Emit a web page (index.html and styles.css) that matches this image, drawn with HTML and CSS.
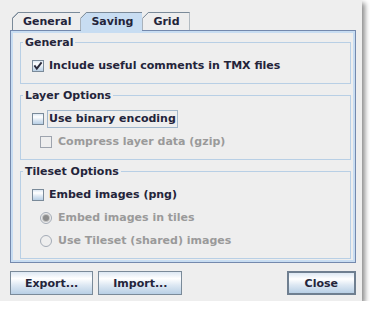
FILE: index.html
```html
<!DOCTYPE html>
<html>
<head>
<meta charset="utf-8">
<link rel="stylesheet" href="styles.css">
</head>
<body>
<div class="window">
  <div class="tabs">
    <div class="tab">General</div>
    <div class="tab sel">Saving</div>
    <div class="tab last">Grid</div>
  </div>
  <div class="panel">
    <fieldset class="group">
      <legend>General</legend>
      <div class="opt"><span class="box"><svg width="10" height="10" viewBox="0 0 10 10"><path d="M2 5.2 L3.8 7.6 L8 2.2" fill="none" stroke="#2a2a3a" stroke-width="1.9" stroke-linecap="square"/></svg></span><span class="lbl">Include useful comments in TMX files</span></div>
    </fieldset>
    <fieldset class="group">
      <legend>Layer Options</legend>
      <div class="opt"><span class="box"></span><span class="lbl focus">Use binary encoding</span></div>
      <div class="opt sub dis"><span class="box"></span><span class="lbl">Compress layer data (gzip)</span></div>
    </fieldset>
    <fieldset class="group">
      <legend>Tileset Options</legend>
      <div class="opt"><span class="box"></span><span class="lbl">Embed images (png)</span></div>
      <div class="opt sub dis"><span class="radio on"></span><span class="lbl">Embed images in tiles</span></div>
      <div class="opt sub dis"><span class="radio"></span><span class="lbl">Use Tileset (shared) images</span></div>
    </fieldset>
  </div>
  <div class="buttons">
    <button class="btn">Export...</button>
    <button class="btn">Import...</button>
    <button class="btn default">Close</button>
  </div>
</div>
</body>
</html>
```
FILE: styles.css
```css
html, body {
  margin: 0;
  padding: 0;
  background: #ffffff;
}
body {
  font-family: "DejaVu Sans", "Liberation Sans", sans-serif;
  font-weight: bold;
  font-size: 11px;
  color: #24243a;
}
.window {
  width: 362px;
  height: 301px;
  box-sizing: border-box;
  background: #eeeeee;
  padding: 12px 6px 0 10px;
  box-shadow: 3px 3px 5px rgba(0, 0, 0, 0.45);
}
.tabs {
  display: flex;
  align-items: flex-end;
  height: 18px;
  margin-left: 2px;
}
.tab {
  box-sizing: border-box;
  height: 18px;
  line-height: 17px;
  padding: 0 9px 0 10px;
  border-top: 1px solid #7a8a99;
  border-left: 1px solid #7a8a99;
  background: linear-gradient(135deg, transparent 4.2px, #7a8a99 4.2px, #7a8a99 5.2px, #eeeeee 5.2px);
  background-origin: border-box;
  clip-path: polygon(6px 0, 100% 0, 100% 100%, 0 100%, 0 6px);
}
.tab.sel {
  height: 19px;
  margin-bottom: -1px;
  position: relative;
  z-index: 1;
  background: linear-gradient(135deg, transparent 4.2px, #7a8a99 4.2px, #7a8a99 5.2px, #c8ddf2 5.2px);
  background-origin: border-box;
}
.tab.last {
  border-right: 1px solid #7a8a99;
}
.panel {
  height: 233px;
  box-sizing: border-box;
  border: 1px solid #7489ad;
  box-shadow: inset 0 0 0 2px #c8ddf2;
  padding: 5px 4px 3px 9px;
}
.group {
  margin: 0;
  padding: 5px 0 6px 0;
  border: 1px solid #b8cfe5;
  min-inline-size: 0;
}
.group + .group {
  margin-top: 5px;
}
.group legend {
  padding: 0 2px;
  margin-left: 2px;
  line-height: 13px;
}
.opt {
  display: flex;
  align-items: center;
  height: 23px;
}
.box {
  width: 12px;
  height: 12px;
  box-sizing: border-box;
  border: 1px solid #7a8a99;
  margin-left: 11px;
  background: linear-gradient(#dde8f3 0%, #ffffff 30%, #dde8f3 60%, #b8cfe5 100%);
  display: flex;
  align-items: center;
  justify-content: center;
}
.lbl {
  margin-left: 5px;
  line-height: 14px;
  white-space: nowrap;
}
.lbl.focus {
  margin-left: 3px;
  padding: 1px 1px;
  border: 1px solid #a3b8cc;
}
.opt.sub .box,
.opt.sub .radio {
  margin-left: 19px;
}
.opt.sub .lbl {
  margin-left: 6px;
}
.opt.dis {
  color: #9a9a9a;
}
.opt.dis .box {
  background: none;
  border-color: #9ea4ae;
}
.radio {
  width: 12px;
  height: 12px;
  box-sizing: border-box;
  border: 1px solid #a4abb6;
  border-radius: 50%;
  display: flex;
  align-items: center;
  justify-content: center;
}
.radio.on::after {
  content: "";
  width: 6px;
  height: 6px;
  border-radius: 50%;
  background: #8c8c8c;
  box-shadow: 0 0 0 1px #c4c4c4;
}
.buttons {
  display: flex;
  gap: 5px;
  margin-top: 8px;
}
.btn {
  height: 24px;
  box-sizing: border-box;
  padding: 0 14px;
  border: 1px solid #7a8a99;
  border-radius: 0;
  background: linear-gradient(#dde8f3 0%, #ffffff 30%, #dde8f3 60%, #b8cfe5 100%);
  font-family: "DejaVu Sans", "Liberation Sans", sans-serif;
  font-weight: bold;
  font-size: 11px;
  color: #24243a;
}
.btn.default {
  margin-left: auto;
  border: 2px solid #6f7f90;
  padding: 0 16px;
}
```
